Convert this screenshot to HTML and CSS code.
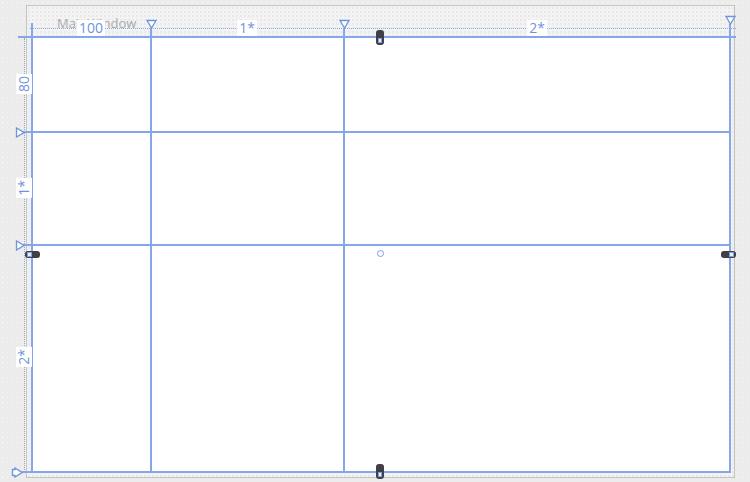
FILE: index.html
```html
<!DOCTYPE html>
<html>
<head>
<meta charset="utf-8">
<link rel="stylesheet" href="styles.css">
</head>
<body>
<div class="canvas">
  <div class="frame">
    <div class="title">MainWindow</div>
  </div>

  <div class="grid">
    <div class="cell"></div><div class="cell"></div><div class="cell"></div>
    <div class="cell"></div><div class="cell"></div><div class="cell"></div>
    <div class="cell"></div><div class="cell"></div><div class="cell"></div>
  </div>

  <!-- rulers -->
  <div class="ruler-h"></div>
  <div class="ruler-v"></div>

  <!-- line extensions -->
  <div class="ext ext-top"></div>
  <div class="ext ext-left"></div>
  <div class="ext ext-c1"></div>
  <div class="ext ext-c2"></div>
  <div class="ext ext-c3"></div>
  <div class="ext ext-r1"></div>
  <div class="ext ext-r2"></div>
  <div class="ext ext-r3"></div>

  <!-- column markers -->
  <svg class="tri t-c1" width="11" height="10" viewBox="0 0 11 10"><path d="M1 1.5 H10 L5.5 9 Z" fill="#fff" stroke="#6f93e0" stroke-width="1.3"/></svg>
  <svg class="tri t-c2" width="11" height="10" viewBox="0 0 11 10"><path d="M1 1.5 H10 L5.5 9 Z" fill="#fff" stroke="#6f93e0" stroke-width="1.3"/></svg>
  <svg class="tri t-c3" width="11" height="10" viewBox="0 0 11 10"><path d="M1 1.5 H10 L5.5 9 Z" fill="#fff" stroke="#6f93e0" stroke-width="1.3"/></svg>

  <!-- row markers -->
  <svg class="tri t-r1" width="10" height="11" viewBox="0 0 10 11"><path d="M1.5 1 V10 L9 5.5 Z" fill="#fff" stroke="#6f93e0" stroke-width="1.3"/></svg>
  <svg class="tri t-r2" width="10" height="11" viewBox="0 0 10 11"><path d="M1.5 1 V10 L9 5.5 Z" fill="#fff" stroke="#6f93e0" stroke-width="1.3"/></svg>
  <svg class="tri t-r3" width="12" height="11" viewBox="0 0 12 11"><path d="M1.5 2.5 H4 V1 L11 5.5 L4 10 V8.5 H1.5 Z" fill="#fff" stroke="#6f93e0" stroke-width="1.3"/></svg>

  <!-- labels -->
  <span class="lbl lbl-c1">100</span>
  <span class="lbl lbl-c2">1*</span>
  <span class="lbl lbl-c3">2*</span>
  <span class="lbl rot lbl-r1">80</span>
  <span class="lbl rot lbl-r2">1*</span>
  <span class="lbl rot lbl-r3">2*</span>

  <!-- adorners -->
  <div class="handle hv h-top"><i></i></div>
  <div class="handle hv h-bottom"><i></i></div>
  <div class="handle hh h-left"><i></i></div>
  <div class="handle hh h-right"><i></i></div>
  <div class="center-dot"></div>
</div>
</body>
</html>
```

FILE: styles.css
```css
html, body {
  margin: 0;
  padding: 0;
}
body {
  width: 750px;
  height: 482px;
  overflow: hidden;
  background-color: #ececec;
  background-image: radial-gradient(circle, #f8f8f8 0.8px, transparent 1px);
  background-size: 5px 5px;
  font-family: "Open Sans", "Noto Sans", sans-serif;
}
.canvas {
  position: relative;
  width: 750px;
  height: 482px;
}
.frame {
  position: absolute;
  left: 26px;
  top: 5px;
  width: 707px;
  height: 471px;
  border: 1px solid #c4c4c4;
  background-color: #f3f3f3;
  background-image: radial-gradient(circle, #e2e2e2 0.6px, transparent 0.9px);
  background-size: 4px 4px;
}
.title {
  position: absolute;
  left: 30px;
  top: 8px;
  font-size: 13px;
  color: #a9a9a9;
  line-height: 18px;
}
.grid {
  position: absolute;
  left: 31px;
  top: 36px;
  display: grid;
  grid-template-columns: 117px 191px 384px;
  grid-template-rows: 93px 111px 225px;
  gap: 2px;
  border: 2px solid #86a6ea;
  background: #86a6ea;
}
.cell {
  background: #ffffff;
}
.ruler-h {
  position: absolute;
  left: 30px;
  top: 28px;
  width: 706px;
  height: 0;
  border-top: 1px dotted #8eaaea;
}
.ruler-v {
  position: absolute;
  left: 24px;
  top: 38px;
  width: 0;
  height: 434px;
  border-left: 1px dotted #9aa9c8;
}
.ext {
  position: absolute;
  background: #86a6ea;
}
.ext-top { left: 18px; top: 36px; width: 718px; height: 2px; }
.ext-left { left: 31px; top: 23px; width: 2px; height: 13px; }
.ext-c1 { left: 150px; top: 28px; width: 2px; height: 8px; }
.ext-c2 { left: 343px; top: 28px; width: 2px; height: 8px; }
.ext-c3 { left: 729px; top: 24px; width: 2px; height: 12px; }
.ext-r1 { left: 23px; top: 131px; width: 8px; height: 2px; }
.ext-r2 { left: 23px; top: 244px; width: 8px; height: 2px; }
.ext-r3 { left: 22px; top: 471px; width: 9px; height: 2px; }

.tri {
  position: absolute;
  display: block;
}
.t-c1 { left: 146px; top: 19px; }
.t-c2 { left: 339px; top: 19px; }
.t-c3 { left: 725px; top: 15px; }
.t-r1 { left: 15px; top: 127px; }
.t-r2 { left: 15px; top: 240px; }
.t-r3 { left: 11px; top: 467px; }

.lbl {
  position: absolute;
  font-size: 14px;
  line-height: 16px;
  color: #6f93e0;
  background: #ffffff;
  padding: 0 2px;
  transform: translate(-50%, -50%);
  white-space: nowrap;
}
.lbl-c1 { left: 91px; top: 28px; }
.lbl-c2 { left: 247px; top: 28px; }
.lbl-c3 { left: 537px; top: 28px; }
.rot { transform: translate(-50%, -50%) rotate(-90deg); }
.lbl-r1 { left: 24px; top: 84px; }
.lbl-r2 { left: 24px; top: 188px; }
.lbl-r3 { left: 24px; top: 357px; }

.handle {
  position: absolute;
  background: #3f3f46;
  border-radius: 3px;
}
.handle i {
  position: absolute;
  background: #e8eefc;
  border: 1px solid #7b9ee6;
}
.hv { width: 8px; height: 15px; }
.hv i { left: 2px; bottom: 2px; width: 2px; height: 3px; }
.hh { width: 15px; height: 7px; }
.hh i { left: 2px; top: 1px; width: 3px; height: 3px; }
.h-top { left: 376px; top: 30px; }
.h-bottom { left: 376px; top: 464px; }
.h-left { left: 25px; top: 251px; }
.h-right { left: 721px; top: 251px; }
.h-right i { left: auto; right: 2px; }
.center-dot {
  position: absolute;
  left: 377px;
  top: 250px;
  width: 5px;
  height: 5px;
  border: 1px solid #7b9ee6;
  border-radius: 50%;
  background: #fff;
}
```
